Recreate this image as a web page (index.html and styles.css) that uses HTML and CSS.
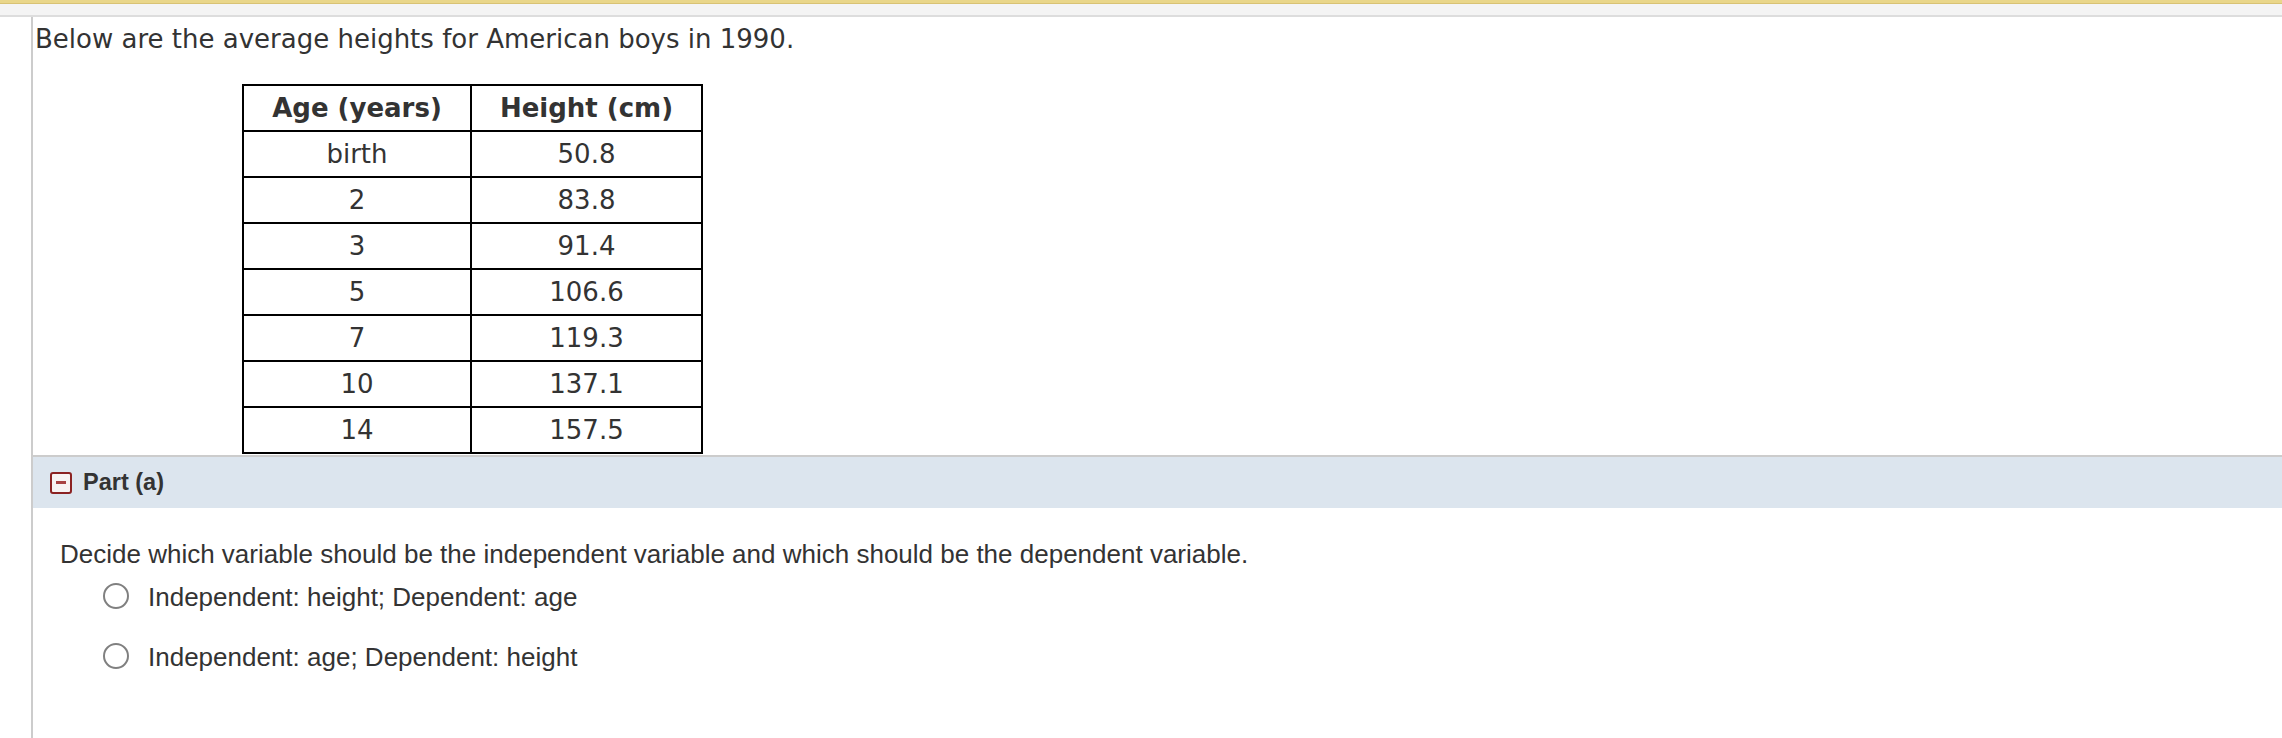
FILE: index.html
```html
<!DOCTYPE html>
<html lang="en">
<head>
<meta charset="utf-8">
<title>Average heights</title>
<link rel="stylesheet" href="styles.css">
</head>
<body>
<div class="topbar"></div>
<div class="content">
  <p class="intro">Below are the average heights for American boys in 1990.</p>
  <table class="data">
    <colgroup><col class="c1"><col class="c2"></colgroup>
    <thead>
      <tr><th>Age (years)</th><th>Height (cm)</th></tr>
    </thead>
    <tbody>
      <tr><td>birth</td><td>50.8</td></tr>
      <tr><td>2</td><td>83.8</td></tr>
      <tr><td>3</td><td>91.4</td></tr>
      <tr><td>5</td><td>106.6</td></tr>
      <tr><td>7</td><td>119.3</td></tr>
      <tr><td>10</td><td>137.1</td></tr>
      <tr><td>14</td><td>157.5</td></tr>
    </tbody>
  </table>
  <div class="part-header">
    <span class="toggle" aria-hidden="true"><span class="minus"></span></span>
    <span class="part-title">Part (a)</span>
  </div>
  <div class="part-body">
    <p class="question">Decide which variable should be the independent variable and which should be the dependent variable.</p>
    <label class="option"><input type="radio" name="pa"><span>Independent: height; Dependent: age</span></label>
    <label class="option"><input type="radio" name="pa"><span>Independent: age; Dependent: height</span></label>
  </div>
</div>
</body>
</html>
```
FILE: styles.css
```css
html, body {
  margin: 0;
  padding: 0;
  background: #ffffff;
}

body {
  height: 738px;
  overflow: hidden;
  display: flex;
  flex-direction: column;
}

.topbar {
  height: 12px;
  background: #f4f4f4;
  border-top: 3px solid #e9d68a;
  border-bottom: 2px solid #dddddd;
  box-shadow: inset 0 1px 0 #d8c274;
  flex: none;
}

.content {
  flex: 1;
  margin-left: 31px;
  border-left: 2px solid #cccccc;
  display: flex;
  flex-direction: column;
  align-items: stretch;
}

.intro {
  margin: 7px 0 0 2px;
  font-family: "DejaVu Sans", Verdana, sans-serif;
  font-size: 26px;
  color: #333333;
  line-height: 30px;
}

.data {
  margin: 30px 0 0 209px;
  border-spacing: 0;
  border-top: 2px solid #000000;
  border-left: 2px solid #000000;
  table-layout: fixed;
  font-family: "DejaVu Sans", Verdana, sans-serif;
  font-size: 26px;
  color: #333333;
  align-self: flex-start;
}

.data .c1 { width: 228px; }
.data .c2 { width: 231px; }

.data th,
.data td {
  height: 44px;
  padding: 0;
  text-align: center;
  vertical-align: middle;
  border-right: 2px solid #000000;
  border-bottom: 2px solid #000000;
}

.data th {
  font-weight: bold;
}

.part-header {
  display: flex;
  align-items: center;
  height: 51px;
  margin-top: 1px;
  border-top: 2px solid #cccccc;
  background: #dce5ee;
  padding-left: 17px;
}

.toggle {
  width: 18px;
  height: 18px;
  border: 2px solid #8b2222;
  border-radius: 3px;
  background: #f7f3f3;
  display: flex;
  align-items: center;
  justify-content: center;
}

.minus {
  width: 10px;
  height: 3px;
  background: #a84343;
}

.part-title {
  margin-left: 11px;
  font-family: "Liberation Sans", Arial, sans-serif;
  font-weight: bold;
  font-size: 23.5px;
  color: #333333;
}

.part-body {
  padding-left: 27px;
  font-family: "Liberation Sans", Arial, sans-serif;
  font-size: 26px;
  color: #333333;
}

.question {
  margin: 31px 0 0 0;
  line-height: 30px;
}

.option {
  display: flex;
  align-items: center;
  height: 30px;
  margin-top: 13px;
  line-height: 30px;
}

.option + .option {
  margin-top: 30px;
}

.option input {
  appearance: none;
  -webkit-appearance: none;
  width: 26px;
  height: 26px;
  margin: 0 19px 3px 43px;
  border: 2px solid #808080;
  border-radius: 50%;
  background: #ffffff;
  box-sizing: border-box;
}
```
